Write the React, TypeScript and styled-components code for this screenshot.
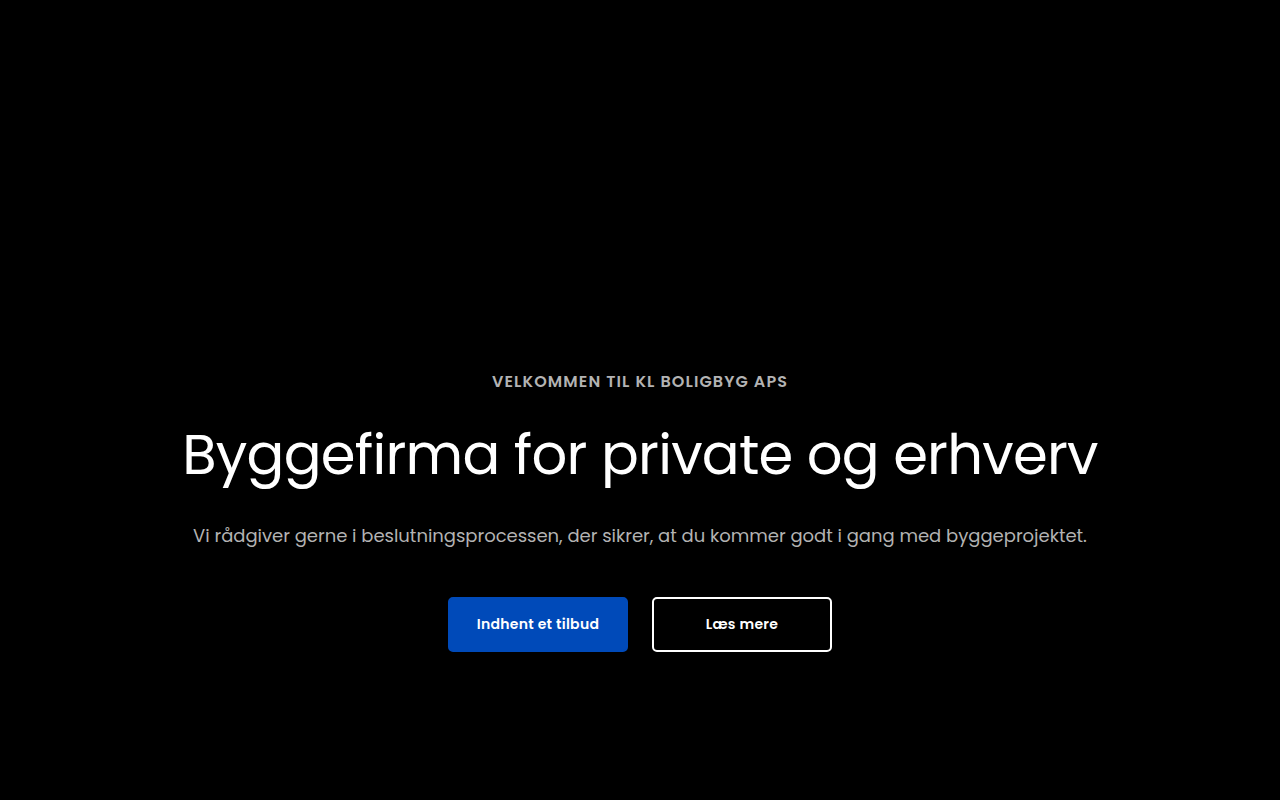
import styled, { createGlobalStyle } from "styled-components";

const GlobalStyle = createGlobalStyle`
  html, body {
    margin: 0;
    padding: 0;
    background: #000;
  }
  body {
    font-family: Poppins, Inter, "Noto Sans", sans-serif;
  }
`;

const Hero = styled.section`
  width: 100%;
  height: 800px;
  box-sizing: border-box;
  padding-top: 369px;
  display: flex;
  flex-direction: column;
  align-items: center;
  background: #000;
`;

const Kicker = styled.p`
  margin: 0;
  font-size: 16px;
  line-height: 26px;
  font-weight: 600;
  letter-spacing: 1.1px;
  text-transform: uppercase;
  color: #b3b3b3;
`;

const Title = styled.h1`
  margin: 26px 0 0;
  font-size: 56px;
  line-height: 67px;
  font-weight: 400;
  color: #fff;
  letter-spacing: -0.75px;
`;

const Lead = styled.p`
  margin: 34px 0 0;
  font-size: 18px;
  line-height: 28px;
  font-weight: 400;
  letter-spacing: -0.02px;
  color: #b3b3b3;
`;

const Actions = styled.div`
  margin-top: 47px;
  display: flex;
  gap: 24px;
`;

const Button = styled.a<{ $outline?: boolean }>`
  box-sizing: border-box;
  width: 180px;
  height: 55px;
  display: flex;
  align-items: center;
  justify-content: center;
  border-radius: 5px;
  font-size: 14px;
  font-weight: 600;
  letter-spacing: 0.3px;
  color: #fff;
  text-decoration: none;
  background: ${(p) => (p.$outline ? "transparent" : "#004ab9")};
  border: 2px solid ${(p) => (p.$outline ? "#fff" : "#004ab9")};
`;

export default function App() {
  return (
    <>
      <GlobalStyle />
      <Hero>
        <Kicker>Velkommen til KL Boligbyg ApS</Kicker>
        <Title>Byggefirma for private og erhverv</Title>
        <Lead>
          Vi rådgiver gerne i beslutningsprocessen, der sikrer, at du kommer godt i gang med byggeprojektet.
        </Lead>
        <Actions>
          <Button href="#">Indhent et tilbud</Button>
          <Button href="#" $outline>
            Læs mere
          </Button>
        </Actions>
      </Hero>
    </>
  );
}
